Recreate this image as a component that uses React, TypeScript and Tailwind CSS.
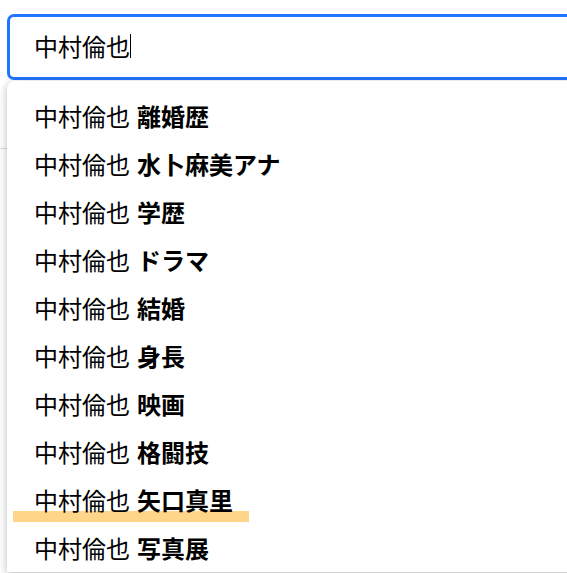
import React from "react";

const items = [
  "離婚歴",
  "水卜麻美アナ",
  "学歴",
  "ドラマ",
  "結婚",
  "身長",
  "映画",
  "格闘技",
  "矢口真里",
  "写真展",
];

export default function App() {
  return (
    <div
      className="relative w-[567px] h-[573px] overflow-hidden bg-white text-black"
      style={{ fontFamily: '"Noto Sans CJK JP", "Noto Sans", sans-serif' }}
    >
      <div className="pt-[14px] pl-[7px]">
        <div className="w-[640px] h-[66px] border-[3px] border-[#1f75fe] rounded-[7px] flex items-center pl-[24px] pb-[2px]">
          <span className="text-[24px] leading-none">中村倫也</span>
          <span className="w-px h-[24px] bg-black" />
        </div>
      </div>
      <div className="mt-[68px] border-t border-[#dddddd]" />
      <div className="absolute left-[7px] top-[81px] w-[640px] bg-white rounded-tl-[8px] shadow-[0_2px_8px_rgba(0,0,0,0.28)] pt-[11px]">
        {items.map((s) => (
          <div key={s} className="relative h-[48px] flex items-center pl-[27px] text-[24px] leading-none">
            {s === "矢口真里" && (
              <div className="absolute left-[6px] top-[35px] w-[236px] h-[11px] bg-[#ffd58a]" />
            )}
            <span className="relative">
              中村倫也<span className="inline-block w-[7px]" />
              <b className="font-bold">{s}</b>
            </span>
          </div>
        ))}
      </div>
    </div>
  );
}
